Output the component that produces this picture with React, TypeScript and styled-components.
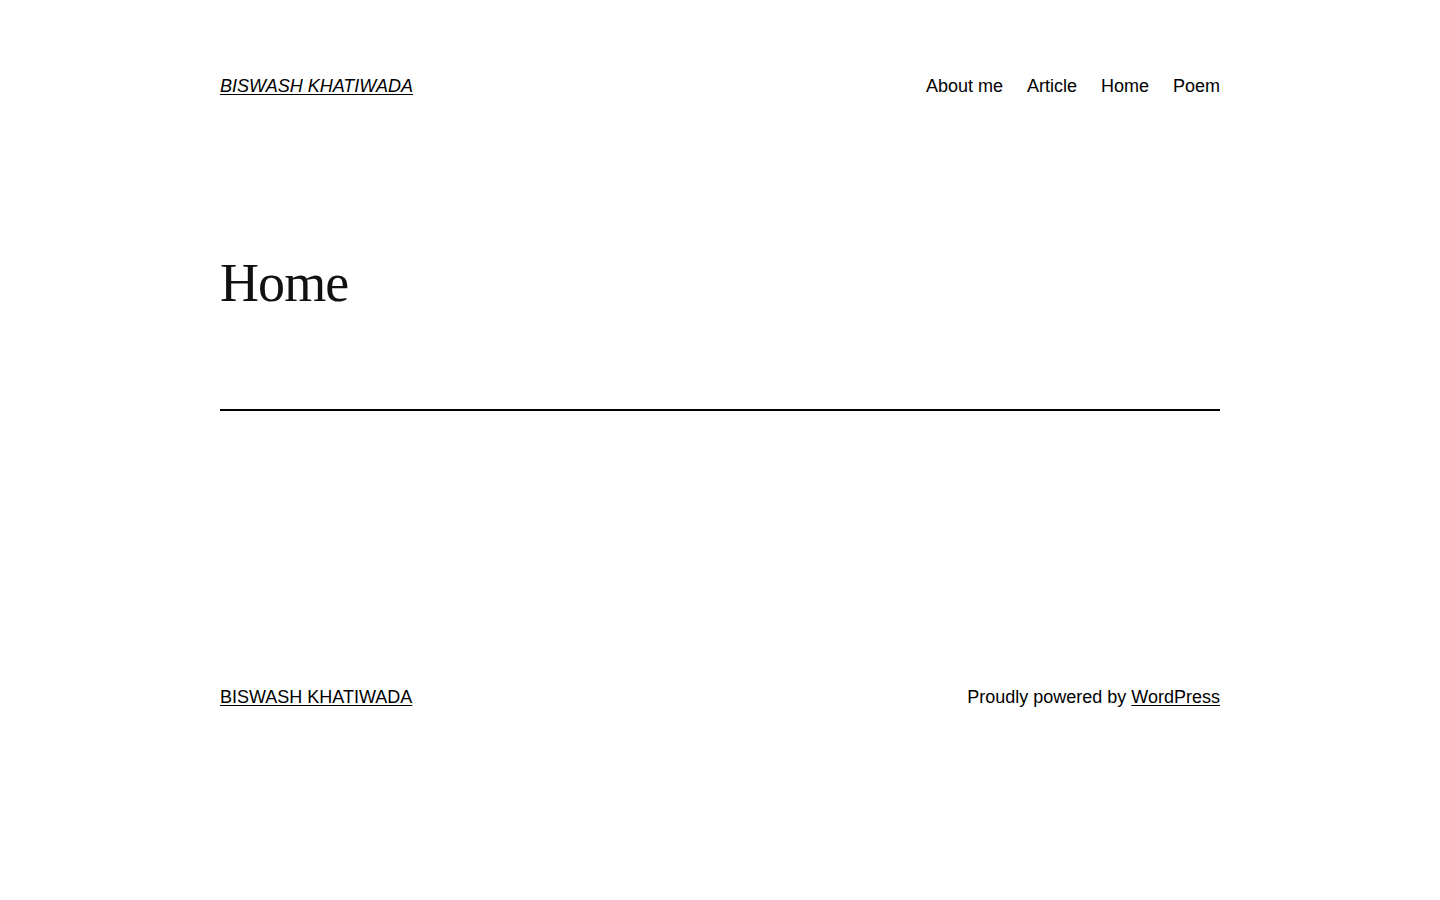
import React from "react";
import styled, { createGlobalStyle } from "styled-components";

const Global = createGlobalStyle`
  html, body { margin: 0; padding: 0; background: #ffffff; }
  body {
    font-family: "Liberation Sans", Arial, sans-serif;
    font-size: 18px;
    line-height: 1.6;
    color: #000000;
  }
  * { box-sizing: border-box; }
`;

const Page = styled.div`
  width: 1000px;
  margin: 0 auto;
  padding-top: 72px;
  display: flex;
  flex-direction: column;
`;

const Header = styled.header`
  display: flex;
  justify-content: space-between;
  align-items: center;
`;

const SiteTitle = styled.a`
  font-style: italic;
  color: #000;
  text-decoration: underline;
  text-underline-offset: 2px;
  font-size: 18px;
  line-height: 28.8px;
`;

const Nav = styled.nav`
  display: flex;
  gap: 24px;
`;

const NavLink = styled.a`
  color: #000;
  text-decoration: none;
  font-size: 18px;
  line-height: 28.8px;
`;

const Main = styled.main`
  margin-top: 149px;
  display: flex;
  flex-direction: column;
`;

const Title = styled.h1`
  margin: 0;
  font-family: "Liberation Serif", "Times New Roman", serif;
  font-weight: 400;
  font-size: 54px;
  line-height: 66px;
  letter-spacing: -0.9px;
  color: #111;
`;

const Separator = styled.hr`
  margin: 93px 0 0;
  border: none;
  height: 2px;
  background: #000;
`;

const Footer = styled.footer`
  margin-top: 272px;
  display: flex;
  justify-content: space-between;
  align-items: center;
  font-size: 18px;
  line-height: 28.8px;
`;

const FooterLink = styled.a`
  color: #000;
  text-decoration: underline;
  text-underline-offset: 2px;
`;

const Credit = styled.span`
  color: #000;
`;

export default function App() {
  return (
    <>
      <Global />
      <Page>
        <Header>
          <SiteTitle href="#">BISWASH KHATIWADA</SiteTitle>
          <Nav>
            <NavLink href="#">About me</NavLink>
            <NavLink href="#">Article</NavLink>
            <NavLink href="#">Home</NavLink>
            <NavLink href="#">Poem</NavLink>
          </Nav>
        </Header>
        <Main>
          <Title>Home</Title>
          <Separator />
        </Main>
        <Footer>
          <FooterLink href="#">BISWASH KHATIWADA</FooterLink>
          <Credit>
            Proudly powered by <FooterLink href="#">WordPress</FooterLink>
          </Credit>
        </Footer>
      </Page>
    </>
  );
}
